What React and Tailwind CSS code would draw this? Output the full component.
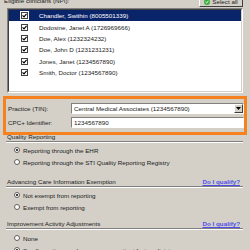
import React from "react";

const rows = [
  "Chandler, Swithin (8005501339)",
  "Dodosine, Janet A (1726969666)",
  "Doe, Alex (1232324232)",
  "Doe, John D (1231231231)",
  "Jones, Janet (1234567890)",
  "Smith, Doctor (1234567890)",
];

function Check({ sel }) {
  return (
    <div className={"w-[7px] h-[7px] bg-white border border-[#404040] flex items-center justify-center " + (sel ? "outline outline-1 outline-white" : "")}>
      <svg width="5" height="5" viewBox="0 0 5 5">
        <path d="M0.5 2.3 L2 3.8 L4.6 0.8" stroke="#000" strokeWidth="1.2" fill="none" />
      </svg>
    </div>
  );
}

function Radio({ on, label }) {
  return (
    <div className="flex items-center h-[12px] pl-[14px] gap-[3px]">
      <div className="w-[6px] h-[6px] rounded-full bg-white border border-[#606060] flex items-center justify-center">
        {on && <div className="w-[2px] h-[2px] rounded-full bg-black" />}
      </div>
      <span>{label}</span>
    </div>
  );
}

function Section({ title, link }) {
  return (
    <div className="flex flex-col pl-[6px] pr-[7px]">
      <div className="flex justify-between items-end h-[8px] pl-[1px]">
        <span>{title}</span>
        {link && (
          <span className="text-[#4f4fe8] underline font-bold pr-[3px]">Do I qualify?</span>
        )}
      </div>
      <div className="h-[2px] border-t border-[#808080] border-b border-b-white mt-[1px]" />
    </div>
  );
}

export default function App() {
  return (
    <div
      className="w-[250px] h-[250px] overflow-hidden bg-[#d4d0c8] text-[6.25px] leading-[7px] text-[#1a1a1a] flex flex-col"
      style={{ fontFamily: '"Liberation Sans", Arial, sans-serif' }}
    >
      <div className="flex justify-between items-end h-[14px] -mt-[7px] pl-[4px] pr-[7px]">
        <span className="mb-[3px]">Eligible clinicians (NPI):</span>
        <div className="w-[44px] h-[14px] bg-[#d4d0c8] border border-t-white border-l-white border-r-[#404040] border-b-[#404040] flex items-end justify-center gap-[2px] pb-[1px]">
          <div className="w-[6px] h-[6px] rounded-full bg-[#3cae3c] flex items-center justify-center">
            <svg width="4" height="4" viewBox="0 0 4 4"><path d="M0.5 2 L1.6 3 L3.5 0.8" stroke="#fff" strokeWidth="0.9" fill="none" /></svg>
          </div>
          <span>Select all</span>
        </div>
      </div>
      <div className="ml-[7px] mt-[1px] w-[236px] h-[85px] shrink-0 bg-white border border-t-[#808080] border-l-[#808080] border-r-white border-b-white flex flex-col">
        <div className="flex flex-col border border-t-[#404040] border-l-[#404040] border-r-[#d4d0c8] border-b-[#d4d0c8] h-full">
          {rows.map((r, i) => (
            <div
              key={r}
              className={"flex items-center h-[11.4px] shrink-0 " + (i === 0 ? "bg-[#0a246a] text-white" : "")}
            >
              <div className="w-[12px]" />
              <Check sel={i === 0} />
              <span className="ml-[11px]">{r}</span>
            </div>
          ))}
        </div>
      </div>
      <div className="relative z-10 mt-[3px] mx-[3px] h-[39px] shrink-0 border-[3px] border-[#f5821f] bg-[#d4d0c8] flex flex-col justify-center gap-[3px] pl-[2px]">
        <div className="flex items-center">
          <span className="w-[63px]">Practice (TIN):</span>
          <div className="flex-1 h-[11px] bg-white border border-t-[#808080] border-l-[#808080] border-r-white border-b-white flex items-center pl-[2px]">
            <span className="flex-1">Central Medical Associates (1234567890)</span>
            <div className="w-[9px] h-[9px] bg-[#d4d0c8] border border-t-white border-l-white border-r-[#404040] border-b-[#404040] flex items-center justify-center">
              <svg width="5" height="3" viewBox="0 0 5 3"><path d="M0 0 H5 L2.5 3 Z" fill="#000" /></svg>
            </div>
          </div>
        </div>
        <div className="flex items-center">
          <span className="w-[63px]">CPC+ Identifier:</span>
          <div className="flex-1 h-[11px] bg-white border border-t-[#808080] border-l-[#808080] border-r-white border-b-white flex items-center pl-[2px]">
            1234567890
          </div>
        </div>
      </div>
      <div className="-mt-[3px] shrink-0">
        <Section title="Quality Reporting" />
      </div>
      <div className="mt-[1px] shrink-0">
        <Radio on label="Reporting through the EHR" />
        <Radio label="Reporting through the STI Quality Reporting Registry" />
      </div>
      <div className="mt-[9px] shrink-0">
        <Section title="Advancing Care Information Exemption" link />
      </div>
      <div className="mt-[1px] shrink-0">
        <Radio on label="Not exempt from reporting" />
        <Radio label="Exempt from reporting" />
      </div>
      <div className="mt-[6px] shrink-0">
        <Section title="Improvement Activity Adjustments" link />
      </div>
      <div className="mt-[2px] shrink-0">
        <Radio label="None" />
        <Radio on label="Small practice, rural area, or non-patient facing clinician" />
      </div>
    </div>
  );
}
